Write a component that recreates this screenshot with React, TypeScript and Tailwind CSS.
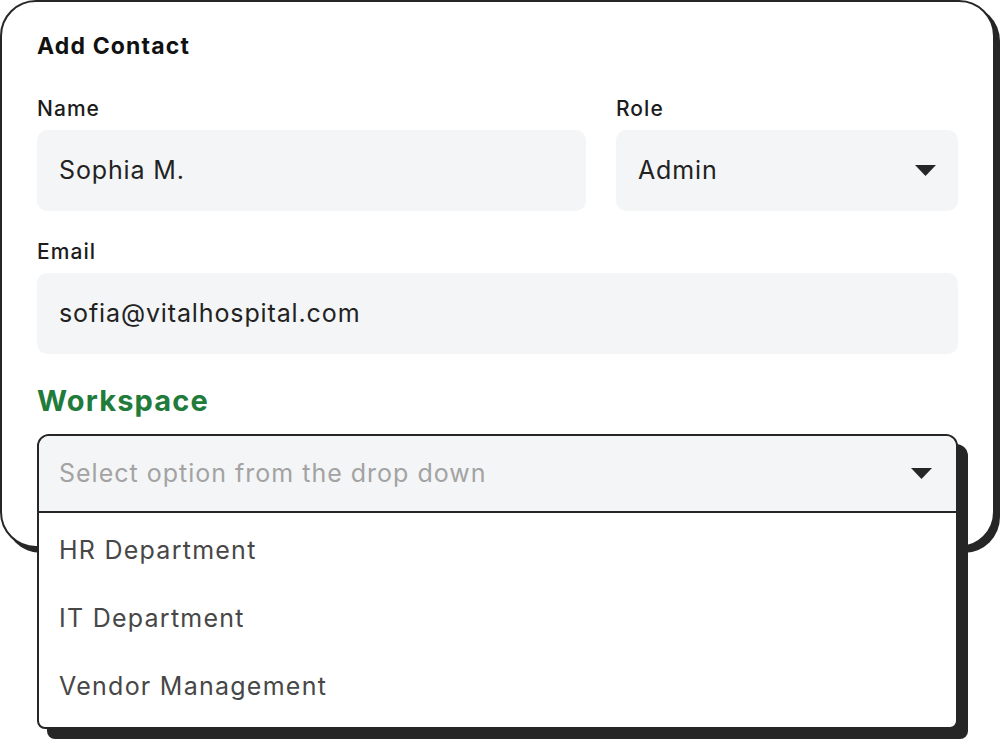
import React from 'react'

const font = { fontFamily: 'Inter, "Noto Sans", sans-serif' }

function Caret() {
  return (
    <svg width="21" height="11" viewBox="0 0 21 11" className="shrink-0">
      <path d="M0 0 H21 L10.5 11 Z" fill="#262626" />
    </svg>
  )
}

function Field({ label, children, className = '' }: { label: string; children: React.ReactNode; className?: string }) {
  return (
    <div className={className}>
      <div className="text-[21px] font-medium leading-[28px] tracking-[0.05em] text-[#1c1c1c]">{label}</div>
      <div className="mt-[7px] h-[81px] rounded-[10px] bg-[#f4f5f6] px-[22px] flex items-center justify-between text-[25px] tracking-[0.035em] text-[#222]">
        {children}
      </div>
    </div>
  )
}

const workspaces = ['HR Department', 'IT Department', 'Vendor Management']

export default function App() {
  return (
    <div className="w-[1000px] h-[739px] bg-white overflow-hidden" style={font}>
      <div className="w-[995px] h-[548px] border-2 border-[#262626] rounded-[36px] shadow-[5px_5px_0_#262626] bg-white pt-[28px] px-[35px]">
        <h1 className="text-[23px] font-bold leading-[32px] tracking-[0.05em] text-[#111]">Add Contact</h1>

        <div className="mt-[33px] grid grid-cols-[549px_1fr] gap-x-[30px]">
          <Field label="Name">
            <span>Sophia M.</span>
          </Field>
          <Field label="Role">
            <span>Admin</span>
            <Caret />
          </Field>
        </div>

        <Field label="Email" className="mt-[27px]">
          <span>sofia@vitalhospital.com</span>
        </Field>

        <h2 className="mt-[29px] text-[29px] font-bold leading-[36px] tracking-[0.04em] text-[#217b3a]">Workspace</h2>

        {/* open select, spills past the card */}
        <div className="mt-[15px] w-[921px] rounded-t-[12px] rounded-b-[8px] border-2 border-[#262626] bg-white shadow-[10px_10px_0_#262626] overflow-hidden">
          <div className="h-[77px] bg-[#f4f5f6] border-b-2 border-[#262626] pl-[20px] pr-[24px] flex items-center justify-between">
            <span className="text-[25px] tracking-[0.04em] text-[#a3a3a3]">Select option from the drop down</span>
            <Caret />
          </div>
          <ul className="pt-[4px] pb-[6px]">
            {workspaces.map((w) => (
              <li key={w} className="h-[68px] pl-[20px] flex items-center text-[25px] tracking-[0.05em] text-[#474747]">
                {w}
              </li>
            ))}
          </ul>
        </div>
      </div>
    </div>
  )
}
